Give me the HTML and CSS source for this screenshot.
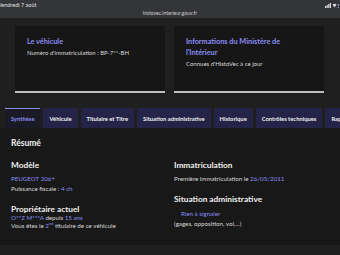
FILE: index.html
```html
<!DOCTYPE html>
<html lang="fr">
  <head>
    <meta charset="UTF-8">
    <meta name="viewport" content="width=device-width, initial-scale=1.0">
    <title>HistoVec</title>
    <link rel="stylesheet" href="styles.css">
  </head>
  <body>
    <div class="status-bar">
      <div class="status-row">
        <span class="status-date">Vendredi 7 août</span>
        <span class="status-icons">
          <svg width="14" height="5" viewBox="0 0 14 5">
            <rect x="0" y="3" width="1.2" height="2" fill="#ddd"/>
            <rect x="1.6" y="2" width="1.2" height="3" fill="#ddd"/>
            <rect x="3.2" y="1" width="1.2" height="4" fill="#ddd"/>
            <rect x="4.8" y="0" width="1.2" height="5" fill="#ddd"/>
            <path d="M7.5 1.5 Q9.5 0 11.5 1.5 L9.5 4.5 Z" fill="#ddd"/>
            <text x="12.3" y="5" font-size="5" fill="#ddd" font-family="Lato, sans-serif">5</text>
          </svg>
        </span>
      </div>
      <div class="status-url">histovec.interieur.gouv.fr</div>
    </div>

    <div class="cards">
      <div class="card">
        <h3 class="card-title">Le véhicule</h3>
        <p class="card-text">Numéro d'immatriculation : BP-7**-BH</p>
      </div>
      <div class="card">
        <h3 class="card-title">Informations du Ministère de l'Intérieur</h3>
        <p class="card-text">Connues d'HistoVec à ce jour</p>
      </div>
    </div>

    <div class="tabs">
      <div class="tab active">Synthèse</div>
      <div class="tab">Véhicule</div>
      <div class="tab">Titulaire et Titre</div>
      <div class="tab">Situation administrative</div>
      <div class="tab">Historique</div>
      <div class="tab">Contrôles techniques</div>
      <div class="tab">Rapport</div>
    </div>

    <div class="panel">
      <h2 class="panel-title">Résumé</h2>
      <div class="grid">
        <div class="col">
          <div class="block">
            <h4 class="block-title">Modèle</h4>
            <p class="line link">PEUGEOT 206+</p>
            <p class="line">Puissance fiscale : <span class="link">4 ch</span></p>
          </div>
          <div class="block">
            <h4 class="block-title close">Propriétaire actuel</h4>
            <p class="line tight"><span class="link">O**Z M***A</span> depuis <span class="link">15 ans</span></p>
            <p class="line tight">Vous êtes le <span class="link">2<sup>nd</sup></span> titulaire de ce véhicule</p>
          </div>
        </div>
        <div class="col">
          <div class="block">
            <h4 class="block-title">Immatriculation</h4>
            <p class="line">Première immatriculation le <span class="link">26/05/2011</span></p>
          </div>
          <div class="block">
            <h4 class="block-title wide">Situation administrative</h4>
            <p class="line ok"><span class="link">Rien à signaler</span></p>
            <p class="line tight">(gages, opposition, vol,...)</p>
          </div>
        </div>
      </div>
    </div>
    <div class="footer"></div>
  </body>
</html>
```
FILE: styles.css
```css
body {
    font-family: Lato, "Open Sans", sans-serif;
    background-color: #1f1f1f;
    color: #e6e6e6;
    margin: 0;
    padding: 0;
    width: 340px;
    height: 255px;
    overflow: hidden;
}

.status-bar {
    background-color: #333538;
    height: 18px;
    display: flex;
    flex-direction: column;
}

.status-row {
    display: flex;
    justify-content: space-between;
    align-items: center;
    height: 10px;
    padding: 0 1px 0 0;
}

.status-date {
    font-size: 5.5px;
    color: #e0e0e0;
    margin-left: -2px;
}

.status-icons {
    display: flex;
}

.status-url {
    text-align: center;
    font-size: 5px;
    color: #d0d0d0;
    line-height: 7px;
}

.cards {
    display: flex;
    gap: 9px;
    padding: 8px 15px 0 15px;
}

.card {
    background-color: #161616;
    border-bottom: 2px solid #bdbdbd;
    width: 150px;
    height: 65px;
}

.card-title {
    color: #8b8cf2;
    font-size: 7.3px;
    font-weight: bold;
    margin: 10px 16px 0 12px;
    line-height: 11px;
}

.card-text {
    font-size: 6px;
    color: #d8d8d8;
    margin: 2px 12px 0 12px;
}

.tabs {
    display: flex;
    gap: 3px;
    padding-left: 5px;
    margin-top: 15px;
    height: 20px;
    white-space: nowrap;
}

.tab {
    background-color: #252448;
    color: #eeeeee;
    font-size: 5.8px;
    font-weight: bold;
    padding: 0 6px;
    display: flex;
    align-items: center;
}

.tab.active {
    background-color: #1a1a26;
    color: #8b8cf2;
    border-top: 1px solid #8b8cf2;
}

.panel {
    background-color: #181818;
    height: 117px;
    padding: 0 11px;
}

.panel-title {
    font-size: 8.5px;
    font-weight: bold;
    color: #f0f0f0;
    margin: 0;
    padding-top: 10px;
    line-height: 10px;
}

.grid {
    display: grid;
    grid-template-columns: 163px 1fr;
    margin-top: 13px;
}

.block {
    margin-bottom: 12px;
}

.block-title {
    font-size: 8.3px;
    font-weight: bold;
    color: #f0f0f0;
    margin: 0 0 5px 0;
    line-height: 9px;
}

.block-title.close {
    margin-bottom: 0;
}

.block-title.wide {
    margin-bottom: 6px;
}

.line {
    font-size: 6.2px;
    margin: 0 0 2px 0;
    line-height: 8px;
    color: #d8d8d8;
}

.line.tight {
    margin-bottom: 0;
}

.line.ok {
    padding-left: 7px;
    margin-bottom: 2px;
}

.link {
    color: #8b8cf2;
}

sup {
    font-size: 4px;
    line-height: 0;
}

.footer {
    background-color: #1d1d1d;
}
```
